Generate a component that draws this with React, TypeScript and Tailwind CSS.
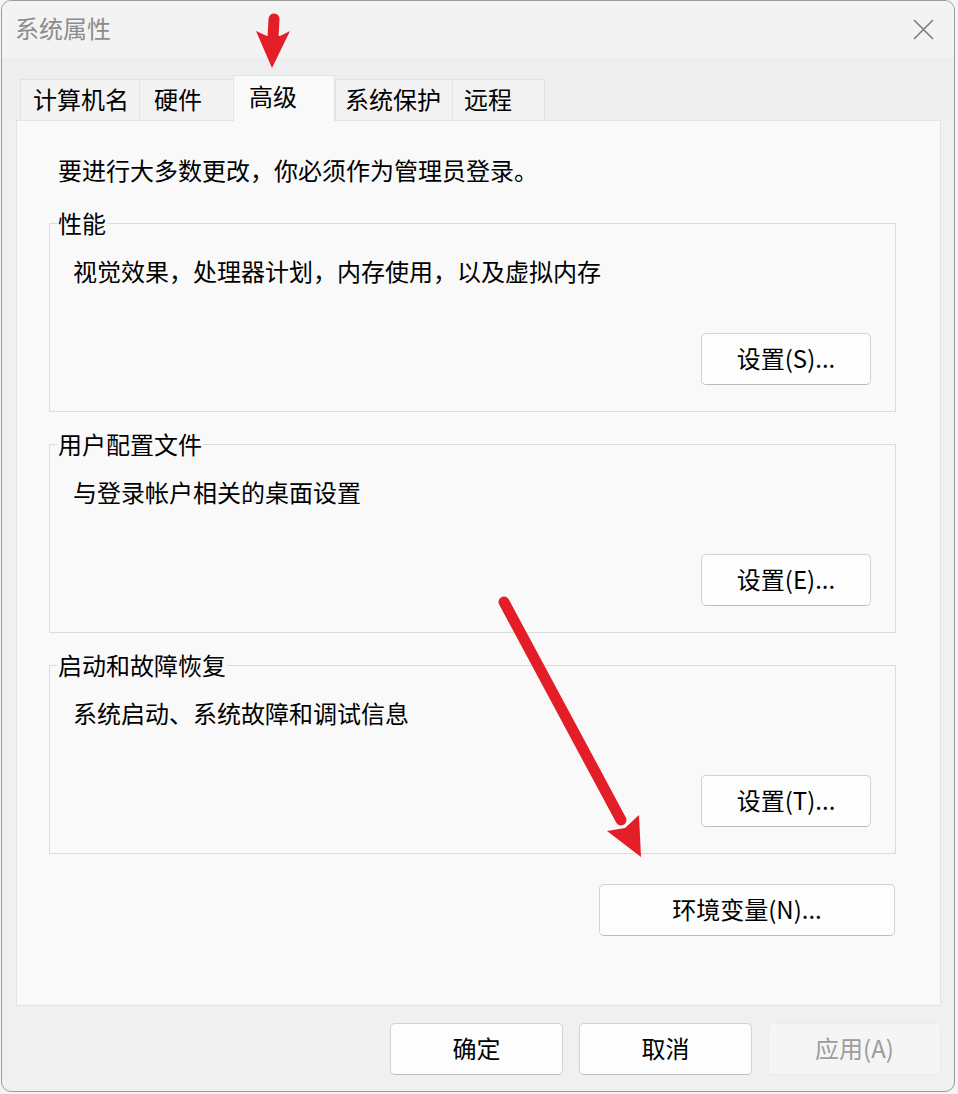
import React from 'react';
import clsx from 'clsx';

const tabs = [
  { label: '计算机名', cls: 'w-[119px] pl-[12px]' },
  { label: '硬件', cls: 'w-[94px] pl-[14px]' },
  { label: '高级', cls: 'w-[102px] pl-[15px]', active: true },
  { label: '系统保护', cls: 'w-[117px] pl-[9px]' },
  { label: '远程', cls: 'w-[93px] pl-[11px] border-r' },
];

const groups = [
  { title: '性能', desc: '视觉效果，处理器计划，内存使用，以及虚拟内存', button: '设置(S)...', mt: 'mt-[29px]' },
  { title: '用户配置文件', desc: '与登录帐户相关的桌面设置', button: '设置(E)...', mt: 'mt-[20px]' },
  { title: '启动和故障恢复', desc: '系统启动、系统故障和调试信息', button: '设置(T)...', mt: 'mt-[20px]' },
];

function DlgButton({
  children,
  className,
  disabled,
}: {
  children: React.ReactNode;
  className?: string;
  disabled?: boolean;
}) {
  return (
    <button
      type="button"
      className={clsx(
        'flex h-[52px] items-center justify-center rounded-[5px] border pb-[2px] text-[24px] leading-[24px]',
        disabled
          ? 'border-[#ececec] bg-[#f5f5f5] text-[#9c9c9c]'
          : 'border-[#d2d2d2] border-b-[#bcbcbc] bg-[#fdfdfd] text-black',
        className,
      )}
    >
      {children}
    </button>
  );
}

function Arrows() {
  // red annotation arrows drawn over the dialog
  return (
    <svg
      className="pointer-events-none absolute left-0 top-0"
      width="958"
      height="1094"
      viewBox="0 0 958 1094"
    >
      <line x1="274" y1="19" x2="273" y2="38" stroke="#e41e26" strokeWidth="11" strokeLinecap="round" />
      <polygon points="272,68 256,31 267,36 280,36 290,31" fill="#e41e26" />
      <line x1="504" y1="602" x2="621" y2="820" stroke="#e41e26" strokeWidth="11" strokeLinecap="round" />
      <polygon points="641,857 607,831 625,828 639,815" fill="#e41e26" />
    </svg>
  );
}

export default function App() {
  return (
    <div className="relative h-[1094px] w-[958px] overflow-hidden bg-[#f4f4f4] pl-[1px] font-['Noto_Sans_CJK_SC','Noto_Sans',sans-serif] text-black">
      <div className="flex h-[1092px] w-[954px] flex-col overflow-hidden rounded-[10px] border border-[#9c9c9c] bg-[#f0f0f0]">
        {/* title bar */}
        <div className="flex h-[57px] items-center justify-between bg-[#f3f3f3] pl-[13px] pr-[20px]">
          <span className="pb-[4px] text-[24px] leading-[24px] text-[#8c8c8c]">系统属性</span>
          <svg width="21" height="21" viewBox="0 0 21 21">
            <path d="M1 1 L20 20 M20 1 L1 20" stroke="#7c7c7c" strokeWidth="1.6" fill="none" />
          </svg>
        </div>

        {/* tabs */}
        <div className="flex h-[62px] items-end bg-[#eeeeee] pl-[18px]">
          {tabs.map((t) =>
            t.active ? (
              <div
                key={t.label}
                className={clsx(
                  'relative z-10 -mb-[1px] flex h-[46px] items-center border-l border-r border-t border-[#e4e4e4] bg-[#f9f9f9] pb-[6px] text-[24px] leading-[24px]',
                  t.cls,
                )}
              >
                {t.label}
              </div>
            ) : (
              <div
                key={t.label}
                className={clsx(
                  'flex h-[41px] items-center border-l border-t border-[#e2e2e2] bg-[#f2f2f2] pb-[2px] text-[24px] leading-[24px]',
                  t.cls,
                )}
              >
                {t.label}
              </div>
            ),
          )}
        </div>

        {/* tab panel */}
        <div className="ml-[14px] flex h-[886px] w-[925px] flex-col border border-[#e3e3e3] bg-[#f9f9f9] pt-[37px]">
          <p className="ml-[41px] text-[24px] leading-[24px]">要进行大多数更改，你必须作为管理员登录。</p>

          {groups.map((g) => (
            <fieldset
              key={g.title}
              className={clsx('ml-[32px] mr-[44px] border border-[#dcdcdc] pb-[26px]', g.mt)}
            >
              <legend className="ml-[7px] px-[1px] text-[24px] leading-[24px]">{g.title}</legend>
              <p className="ml-[23px] mt-[24px] text-[24px] leading-[24px]">{g.desc}</p>
              <div className="mt-[50px] flex justify-end pr-[24px]">
                <DlgButton className="w-[170px]">{g.button}</DlgButton>
              </div>
            </fieldset>
          ))}

          <div className="mr-[45px] mt-[30px] flex justify-end">
            <DlgButton className="w-[296px]">环境变量(N)...</DlgButton>
          </div>
        </div>

        {/* dialog buttons */}
        <div className="ml-[14px] mt-[17px] flex w-[925px] justify-end gap-[16px]">
          <DlgButton className="w-[173px]">确定</DlgButton>
          <DlgButton className="w-[173px]">取消</DlgButton>
          <DlgButton className="w-[173px]" disabled>
            应用(A)
          </DlgButton>
        </div>
      </div>
      <Arrows />
    </div>
  );
}
